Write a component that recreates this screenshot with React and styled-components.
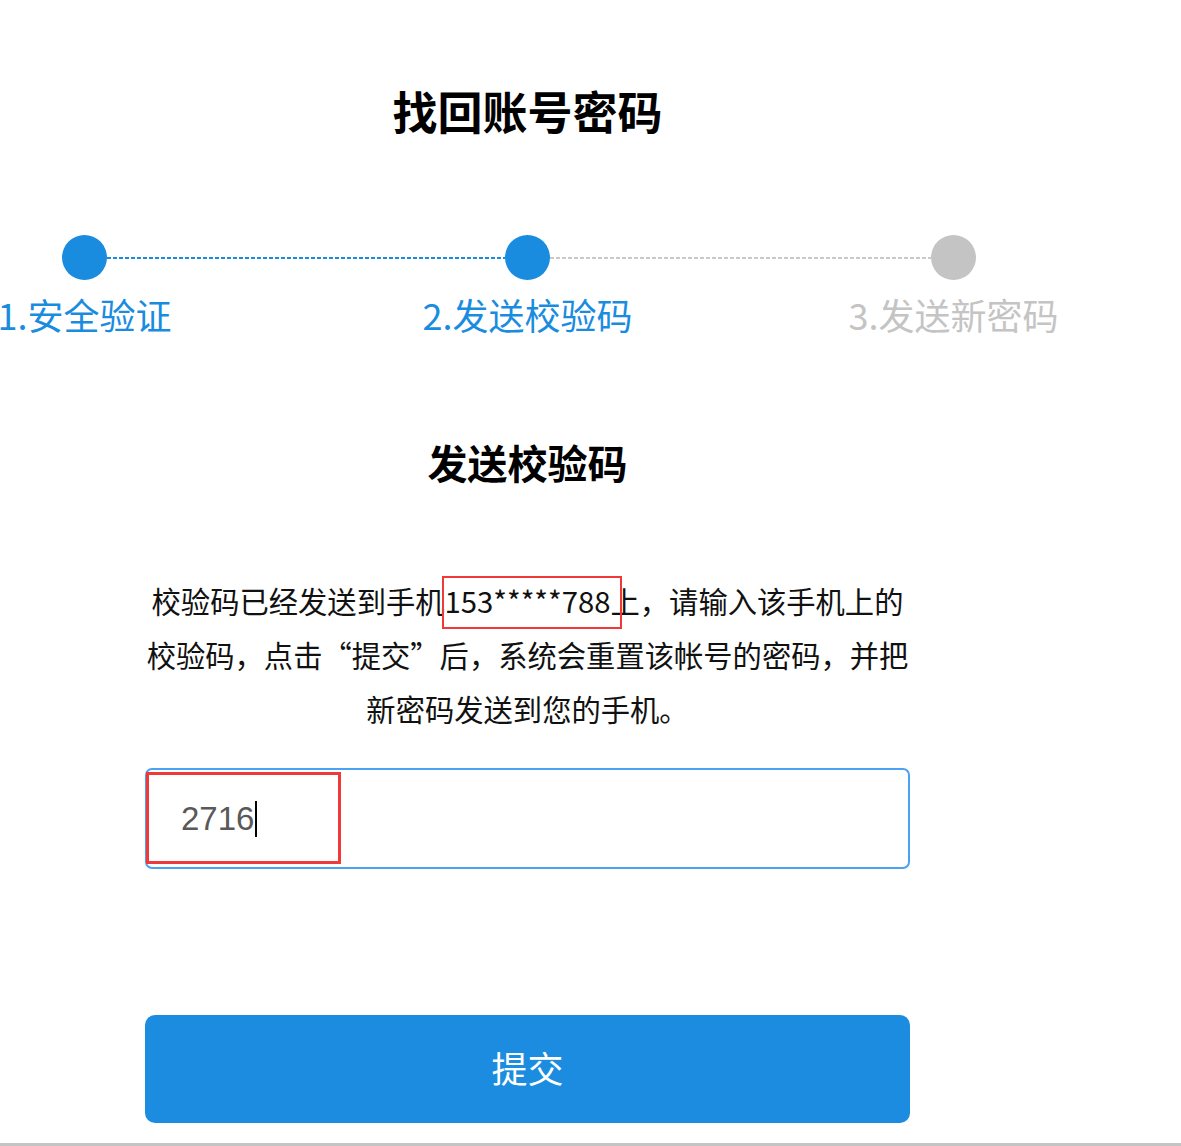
import React from "react";
import styled, { createGlobalStyle } from "styled-components";

const BLUE = "#1a8ce0";
const GRAY = "#c4c4c4";

const GlobalStyle = createGlobalStyle`
  body {
    margin: 0;
    background: #fff;
    font-family: "Noto Sans CJK SC", "Noto Sans", sans-serif;
    color: #000;
  }
`;

const PageWrap = styled.div`
  width: 100%;
  padding: 81px 0 20px;
  border-bottom: 3px solid ${GRAY};
`;

const Page = styled.main`
  width: 1055px;
  display: flex;
  flex-direction: column;
  align-items: center;
`;

const Title = styled.h1`
  margin: 0;
  font-size: 45px;
  line-height: 60px;
  font-weight: 700;
`;

const Steps = styled.div`
  align-self: flex-start;
  margin: 94px 0 0 62px;
  display: grid;
  grid-template-columns: 45px 398px 45px 381px 45px;
  grid-template-rows: 45px 40px;
  row-gap: 14px;
`;

const Dot = styled.span`
  width: 45px;
  height: 45px;
  border-radius: 50%;
  background: ${(p) => (p.$done ? BLUE : GRAY)};
`;

const Link = styled.span`
  align-self: center;
  height: 2px;
  margin-top: 1px;
  background: repeating-linear-gradient(
    to right,
    ${(p) => (p.$done ? BLUE : "#cacaca")} 0 4px,
    transparent 4px 6px
  );
`;

const LabelCell = styled.div`
  grid-row: 2;
  grid-column: ${(p) => p.$col};
  display: flex;
  justify-content: center;
`;

const StepLabel = styled.span`
  white-space: nowrap;
  font-size: 36px;
  line-height: 40px;
  color: ${(p) => (p.$done ? BLUE : GRAY)};
`;

const SubTitle = styled.h2`
  margin: 98px 0 0;
  font-size: 40px;
  line-height: 60px;
  font-weight: 700;
`;

const Notice = styled.p`
  margin: 81px 0 0;
  width: 765px;
  font-size: 29.3px;
  line-height: 54px;
  text-align: center;
  white-space: nowrap;
  color: #111;
`;

const Phone = styled.span`
  display: inline-block;
  position: relative;

  &::after {
    content: "";
    position: absolute;
    top: 3px;
    bottom: -2px;
    left: -3px;
    right: -12px;
    border: 2px solid #f03a3a;
  }
`;

const Field = styled.div`
  position: relative;
  margin-top: 33px;
  width: 765px;
  height: 101px;
  box-sizing: border-box;
  border: 2px solid #4ba2f2;
  border-radius: 7px;
  padding-left: 34px;
  display: flex;
  align-items: center;
  font-family: "Liberation Sans", Arial, sans-serif;
  font-size: 33px;
  color: #595959;
`;

const Caret = styled.span`
  width: 2px;
  height: 36px;
  margin-left: 1px;
  background: #000;
`;

const Mark = styled.span`
  position: absolute;
  left: -1px;
  top: 2px;
  width: 195px;
  height: 92px;
  box-sizing: border-box;
  border: 3px solid #f03a3a;
`;

const Submit = styled.button`
  margin-top: 146px;
  width: 765px;
  height: 108px;
  padding: 0 0 5px;
  border: none;
  border-radius: 10px;
  background: #1b8ce0;
  color: #fff;
  font-family: inherit;
  font-size: 36px;
  cursor: pointer;
`;

const steps = [
  { label: "1.安全验证", done: true },
  { label: "2.发送校验码", done: true },
  { label: "3.发送新密码", done: false },
];

export default function App() {
  return (
    <PageWrap>
      <GlobalStyle />
      <Page>
        <Title>找回账号密码</Title>

        <Steps>
          <Dot $done />
          <Link $done />
          <Dot $done />
          <Link />
          <Dot />
          {steps.map((s, i) => (
            <LabelCell key={s.label} $col={i * 2 + 1}>
              <StepLabel $done={s.done}>{s.label}</StepLabel>
            </LabelCell>
          ))}
        </Steps>

        <SubTitle>发送校验码</SubTitle>

        <Notice>
          校验码已经发送到手机<Phone>153*****788</Phone>上，请输入该手机上的
          <br />
          校验码，点击“提交”后，系统会重置该帐号的密码，并把
          <br />
          新密码发送到您的手机。
        </Notice>

        <Field>
          2716
          <Caret />
          <Mark />
        </Field>

        <Submit>提交</Submit>
      </Page>
    </PageWrap>
  );
}
